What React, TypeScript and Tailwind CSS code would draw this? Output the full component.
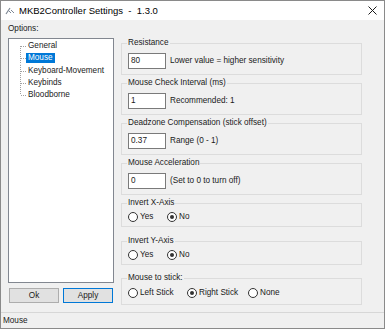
import React from 'react';

const font = "font-['Liberation_Sans',Arial,sans-serif]";

const treeItems = ['General', 'Mouse', 'Keyboard-Movement', 'Keybinds', 'Bloodborne'];

const TreeGutter = ({ index, count }: { index: number; count: number }) => {
  const top = index === 0 ? 6 : 0;
  const bottom = index === count - 1 ? 6 : 12.25;
  return (
    <svg width="17" height="12.25" className="shrink-0">
      <line x1="11.5" y1={top} x2="11.5" y2={bottom} stroke="#a0a0a0" strokeDasharray="1 1" />
      <line x1="12" y1="6.5" x2="17" y2="6.5" stroke="#a0a0a0" strokeDasharray="1 1" />
    </svg>
  );
};

const GroupBox = ({ title, children, className }: { title: string; children: React.ReactNode; className?: string }) => (
  <fieldset className={`w-[241px] border border-[#dcdcdc] pl-[6px] ${className ?? ''}`}>
    <legend className="ml-[-1px] px-[1px] leading-[10px] text-[8.2px] text-[#1a1a1a]">{title}</legend>
    {children}
  </fieldset>
);

const NumberField = ({ value, hint }: { value: string; hint: string }) => (
  <div className="mt-[5px] mb-[5px] flex items-center h-[16px]">
    <div className="w-[38px] h-[16px] border border-[#7a7a7a] bg-white pl-[2px] flex items-center text-[8.2px] leading-[10px]">
      {value}
    </div>
    <span className="ml-[4px] text-[8.2px] leading-[10px]">{hint}</span>
  </div>
);

const Radio = ({ label, checked, width }: { label: string; checked?: boolean; width: string }) => (
  <div className={`flex items-center h-[10px] ${width}`}>
    <span className="w-[10px] h-[10px] rounded-full border border-[#333333] bg-white flex items-center justify-center shrink-0">
      {checked && <span className="w-[4px] h-[4px] rounded-full bg-[#333333]" />}
    </span>
    <span className="ml-[2px] text-[8.2px] leading-[10px]">{label}</span>
  </div>
);

export default function App() {
  return (
    <div className={`w-[385px] h-[329px] border border-[#8a8a8a] bg-[#f0f0f0] flex flex-col text-[#1a1a1a] ${font}`}>
      {/* title bar */}
      <div className="h-[19px] bg-white flex items-center shrink-0">
        <svg width="10" height="8" viewBox="0 0 10 8" className="ml-[4px]">
          <path d="M1 7 L5 1" stroke="#7d8794" strokeWidth="1.2" fill="none" />
          <path d="M4 4 L6 6 M6 3 L9 6" stroke="#7d8794" strokeWidth="1" fill="none" />
        </svg>
        <span className="ml-[4px] text-[9.5px] leading-[12px] whitespace-pre text-black">MKB2Controller Settings  -  1.3.0</span>
        <svg width="9" height="9" viewBox="0 0 9 9" className="ml-auto mr-[7px]">
          <path d="M0.5 0.5 L8.5 8.5 M8.5 0.5 L0.5 8.5" stroke="#1a1a1a" strokeWidth="1" />
        </svg>
      </div>

      {/* body */}
      <div className="h-[292px] flex shrink-0">
        <div className="w-[120px] pl-[7px] pt-[4px] flex flex-col">
          <div className="text-[8.2px] leading-[10px]">Options:</div>
          <div className="mt-[4px] w-[106px] h-[245px] bg-white border border-[#828790] pt-[1px]">
            {treeItems.map((item, i) => (
              <div key={item} className="h-[12.25px] flex items-center">
                <TreeGutter index={i} count={treeItems.length} />
                <span
                  className={`px-[2px] h-[10px] flex items-center text-[8.2px] leading-[10px] ${
                    item === 'Mouse' ? 'bg-[#0078d7] text-white' : ''
                  }`}
                >
                  {item}
                </span>
              </div>
            ))}
          </div>
          <div className="mt-[5px] ml-[1px] flex gap-[4px]">
            <button className="w-[50px] h-[15px] bg-[#e1e1e1] border border-[#adadad] text-[8.2px] leading-[10px] flex items-center justify-center">
              Ok
            </button>
            <button className="w-[50px] h-[15px] bg-[#e1e1e1] border border-[#0078d7] text-[8.2px] leading-[10px] flex items-center justify-center">
              Apply
            </button>
          </div>
        </div>

        <div className="pt-[18px] flex flex-col">
          <GroupBox title="Resistance">
            <NumberField value="80" hint="Lower value = higher sensitivity" />
          </GroupBox>
          <GroupBox title="Mouse Check Interval (ms)" className="mt-[3px]">
            <NumberField value="1" hint="Recommended: 1" />
          </GroupBox>
          <GroupBox title="Deadzone Compensation (stick offset)" className="mt-[3px]">
            <NumberField value="0.37" hint="Range (0 - 1)" />
          </GroupBox>
          <GroupBox title="Mouse Acceleration" className="mt-[3px]">
            <NumberField value="0" hint="(Set to 0 to turn off)" />
          </GroupBox>
          <GroupBox title="Invert X-Axis" className="mt-[3px]">
            <div className="mt-[4px] mb-[4px] flex">
              <Radio label="Yes" width="w-[39px]" />
              <Radio label="No" checked width="w-[40px]" />
            </div>
          </GroupBox>
          <GroupBox title="Invert Y-Axis" className="mt-[9px]">
            <div className="mt-[4px] mb-[4px] flex">
              <Radio label="Yes" width="w-[39px]" />
              <Radio label="No" checked width="w-[40px]" />
            </div>
          </GroupBox>
          <GroupBox title="Mouse to stick:" className="mt-[8px]">
            <div className="mt-[5px] mb-[6px] flex">
              <Radio label="Left Stick" width="w-[59px]" />
              <Radio label="Right Stick" checked width="w-[61px]" />
              <Radio label="None" width="w-[40px]" />
            </div>
          </GroupBox>
        </div>
      </div>

      {/* status bar */}
      <div className="h-[16px] border-t border-[#d7d7d7] flex items-center pl-[2px] text-[8.2px] leading-[10px] shrink-0">
        Mouse
      </div>
    </div>
  );
}
